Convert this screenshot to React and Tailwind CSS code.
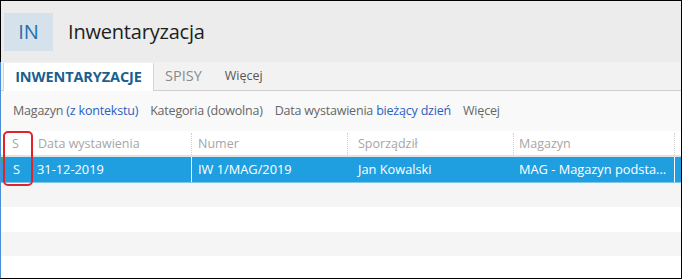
import React from "react";

const font = { fontFamily: '"Open Sans", "Noto Sans", sans-serif' };

function Col({ w, children, className = "" }) {
  return <div className={`shrink-0 flex items-center whitespace-nowrap ${w} ${className}`}>{children}</div>;
}

export default function App() {
  const stripes = ["bg-[#f5f5f5] h-[24px]", "bg-white h-[25px]", "bg-[#f5f5f5] h-[24px]", "bg-white flex-1"];
  return (
    <div className="w-[682px] h-[279px] overflow-hidden bg-white" style={font}>
      <div className="relative w-full h-full border border-black flex flex-col">
        {/* Title header */}
        <div className="h-[61px] bg-[#ececec] flex items-center shrink-0">
          <div className="ml-[3px] w-[49px] h-[38px] bg-[#d6e2eb] flex items-center justify-center text-[20px] text-[#1f70b0] leading-none font-medium">
            IN
          </div>
          <div className="ml-[15px] text-[20px] text-[#1e1e1e] leading-none tracking-[-0.2px]">Inwentaryzacja</div>
        </div>
        <div className="flex-1 flex flex-col border-l border-[#4a8fd6] -ml-px">
          {/* Tabs */}
          <div className="h-[29px] bg-[#f2f2f2] border-b border-[#cfcfcf] flex items-end shrink-0">
            <div className="ml-[2px] h-[28px] -mb-px w-[151px] bg-white border-l border-r border-[#d6d6d6] flex items-center justify-center text-[14.5px] font-bold text-[#1a5f8e] tracking-[-0.1px]">
              INWENTARYZACJE
            </div>
            <div className="h-[28px] flex items-center ml-[11px] text-[14.5px] text-[#8a8a8a]">SPISY</div>
            <div className="h-[28px] flex items-center ml-[23px] text-[12.5px] text-[#555]">Więcej</div>
          </div>
          {/* Filters */}
          <div className="h-[40px] bg-[#f9f9f9] flex items-center text-[12.5px] text-[#666] shrink-0 pl-[12px] tracking-[-0.2px] pt-[1px]">
            <span>
              Magazyn <span className="text-[#2a5fc4]">(z kontekstu)</span>
            </span>
            <span className="ml-[12px]">Kategoria (dowolna)</span>
            <span className="ml-[12px]">
              Data wystawienia <span className="text-[#2a5fc4]">bieżący dzień</span>
            </span>
            <span className="ml-[12px]">Więcej</span>
          </div>
          {/* Grid header */}
          <div className="h-[26px] bg-white border-b-2 border-[#e2e2e2] flex text-[12.5px] text-[#a6a6a6] shrink-0 pt-[2px]">
            <Col w="w-[31px]" className="pl-[11px]">S</Col>
            <Col w="w-[160px]" className="pl-[6px] border-r border-dotted border-[#cfcfcf]">Data wystawienia</Col>
            <Col w="w-[156px]" className="pl-[6px] border-r border-dotted border-[#cfcfcf]">Numer</Col>
            <Col w="w-[166px]" className="pl-[10px] border-r border-dotted border-[#cfcfcf]">Sporządził</Col>
            <Col w="w-[161px]" className="pl-[5px] border-r border-dotted border-[#cfcfcf]">Magazyn</Col>
          </div>
          {/* Selected row */}
          <div className="relative h-[26px] bg-[#1f9fdf] border-b border-[#7cc6ee] flex text-[12.8px] text-white shrink-0">
            <div className="absolute left-0 top-0 w-0 h-0 border-t-[6px] border-r-[6px] border-t-[#3cb043] border-r-transparent" />
            <Col w="w-[31px]" className="pl-[12px]">S</Col>
            <Col w="w-[160px]" className="pl-[5px] border-r border-white">31-12-2019</Col>
            <Col w="w-[156px]" className="pl-[6px]">IW 1/MAG/2019</Col>
            <Col w="w-[166px]" className="pl-[10px]">Jan Kowalski</Col>
            <Col w="w-[161px]" className="pl-[5px] border-r border-white">MAG - Magazyn podsta...</Col>
          </div>
          {stripes.map((c, i) => (
            <div key={i} className={`${c} shrink-0`} />
          ))}
        </div>
        {/* Red highlight */}
        <div className="absolute left-[2px] top-[130px] w-[30px] h-[55px] border-2 border-[#e3232b] rounded-[5px]" />
      </div>
    </div>
  );
}
